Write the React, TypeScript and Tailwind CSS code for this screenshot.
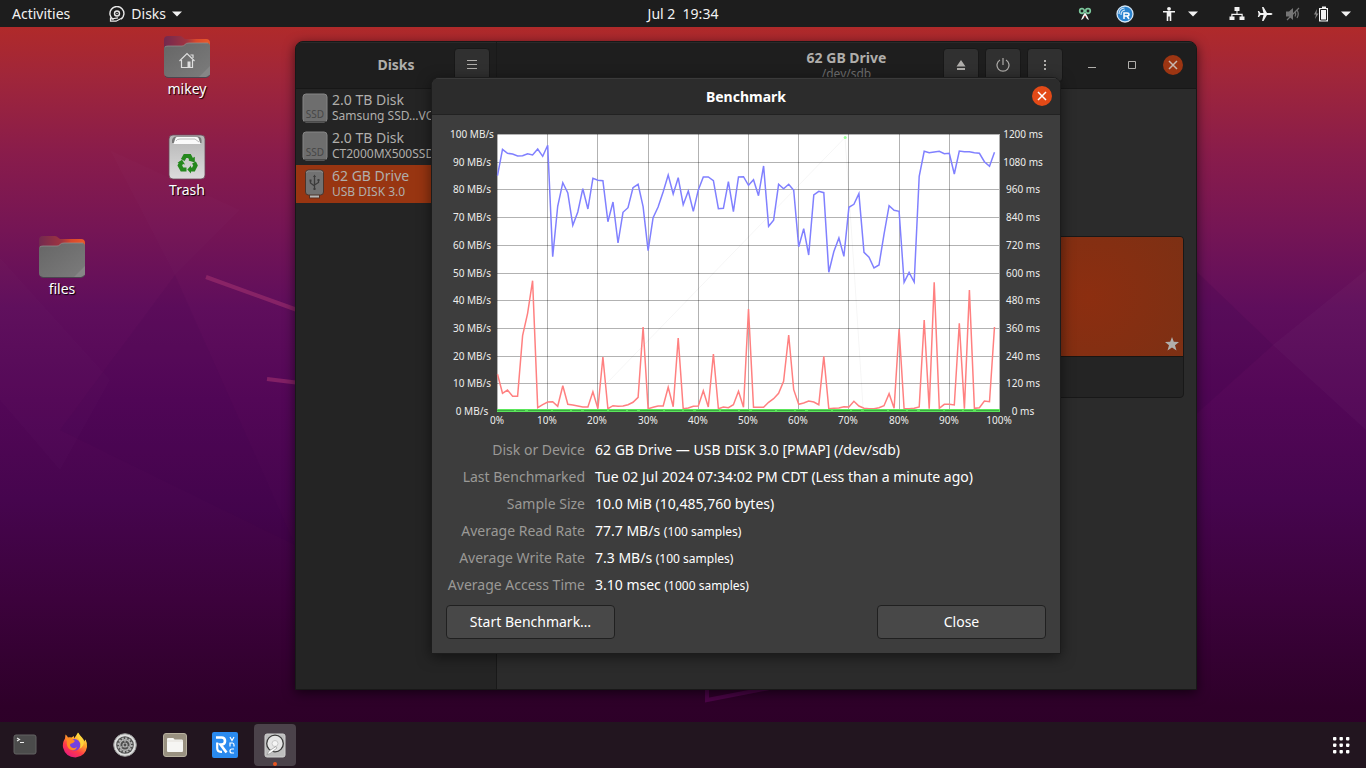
import React from "react";

const READ_TRACE = [
  182, 103, 115, 117, 123, 122, 116, 120, 102, 124, 91, 425, 274, 203, 234, 331, 291, 221, 282, 190,
  196, 197, 320, 261, 384, 292, 278, 218, 208, 275, 407, 308, 276, 230, 180, 237, 188, 269, 228, 289,
  225, 186, 186, 197, 281, 280, 200, 290, 186, 185, 211, 194, 242, 153, 334, 316, 208, 221, 208, 226,
  395, 341, 420, 240, 229, 233, 472, 410, 369, 424, 277, 268, 236, 412, 427, 459, 450, 358, 272, 286,
  289, 502, 472, 501, 184, 109, 113, 111, 109, 116, 115, 177, 108, 110, 110, 113, 115, 140, 154, 112,
];

const WRITE_TRACE = [
  313, 370, 360, 379, 379, 197, 130, 32, 413, 404, 396, 395, 409, 347, 403, 405, 408, 411, 411, 365,
  416, 261, 416, 407, 409, 408, 404, 397, 382, 171, 416, 412, 408, 408, 352, 410, 204, 416, 414, 409,
  408, 362, 411, 252, 416, 411, 413, 404, 364, 412, 117, 412, 412, 412, 397, 386, 370, 334, 195, 359,
  403, 399, 393, 396, 404, 259, 416, 415, 414, 410, 411, 394, 408, 415, 416, 416, 413, 407, 371, 415,
  177, 416, 416, 415, 411, 150, 416, 37, 415, 403, 403, 405, 160, 416, 60, 415, 413, 393, 395, 171,
];

const PLOT = { left: 497, top: 134, width: 502, height: 277 };
const STEP = PLOT.width / 100;

const toPoints = (trace: number[], origin: number) =>
  trace.map((v, i) => `${(PLOT.left + 0.5 + i * STEP).toFixed(1)},${(origin + v / 3).toFixed(1)}`).join(" ");

const TICKS = [0, 1, 2, 3, 4, 5, 6, 7, 8, 9, 10];

function BenchmarkChart() {
  return (
    <svg viewBox="446 127 600 302" className="block h-auto w-full" role="img" aria-label="Benchmark graph">
      <rect x={PLOT.left} y={PLOT.top} width={PLOT.width + 1} height={PLOT.height + 1} fill="#fff" />
      <g stroke="#000" strokeOpacity="0.3" shapeRendering="crispEdges">
        {TICKS.map((t) => {
          const x = Math.round(PLOT.left + t * 50.2) + 0.5;
          const y = Math.round(PLOT.top + t * 27.7) + 0.5;
          return (
            <React.Fragment key={t}>
              <line x1={x} x2={x} y1={PLOT.top} y2={PLOT.top + PLOT.height} />
              <line x1={PLOT.left} x2={PLOT.left + PLOT.width} y1={y} y2={y} />
            </React.Fragment>
          );
        })}
      </g>
      <path d="M606 384 L845 137.5 L854 268 L863 407" fill="none" stroke="#000" strokeOpacity="0.06" strokeWidth="0.7" />
      <polyline points={toPoints(READ_TRACE, 115)} fill="none" stroke="#8080ff" strokeWidth="1.5" />
      <polyline points={toPoints(WRITE_TRACE, 270)} fill="none" stroke="#ff8080" strokeWidth="1.5" />
      <rect x="497" y="409" width="503" height="3" fill="#5ae65a" />
      <line x1="497" x2="1000" y1="410.5" y2="410.5" stroke="#2f8a3a" strokeOpacity="0.65" strokeDasharray="17 2 9 3 23 2" />
      <circle cx="845.2" cy="137.6" r="1.5" fill="#99ff99" />
      <g fill="#eeeeec" fontSize="10" textAnchor="middle">
        {TICKS.map((t) => (
          <React.Fragment key={t}>
            <text x="472" y={Math.round(411 - t * 27.7) + 4}>{t * 10} MB/s</text>
            <text x="1023" y={Math.round(411 - t * 27.7) + 4}>{t * 120} ms</text>
            <text x={Math.round(497 + t * 50.2)} y="424">{t * 10}%</text>
          </React.Fragment>
        ))}
      </g>
    </svg>
  );
}

function Wallpaper() {
  return (
    <svg className="absolute inset-0 h-full w-full" viewBox="0 0 1366 768" preserveAspectRatio="none" aria-hidden="true">
      <defs>
        <linearGradient id="sky" x1="0" y1="0" x2="0" y2="1">
          <stop offset="0.035" stopColor="#b02a2a" />
          <stop offset="0.1" stopColor="#a0263a" />
          <stop offset="0.2" stopColor="#891c4b" />
          <stop offset="0.3" stopColor="#751555" />
          <stop offset="0.4" stopColor="#5f0e5c" />
          <stop offset="0.52" stopColor="#530757" />
          <stop offset="0.65" stopColor="#46054e" />
          <stop offset="0.78" stopColor="#3c023c" />
          <stop offset="0.92" stopColor="#2e0029" />
          <stop offset="1" stopColor="#2c0027" />
        </linearGradient>
      </defs>
      <rect width="1366" height="768" fill="url(#sky)" />
      <path d="M0 258 L110 380 L60 470 L0 400Z" fill="#fff" fillOpacity="0.012" />
      <path d="M110 150 L175 275 L240 210Z" fill="#fff" fillOpacity="0.012" />
      <path d="M175 275 L60 430 L295 545Z" fill="#30004a" fillOpacity="0.08" />
      <path d="M1366 270 L1273 345 L1366 430Z" fill="#fff" fillOpacity="0.025" />
      <path d="M1195 270 L1273 345 L1195 415Z" fill="#30004a" fillOpacity="0.14" />
      <g fill="none" stroke="#a0306e" strokeOpacity="0.6" strokeWidth="4">
        <path d="M206 277 L300 311" />
        <path d="M267 379 L300 383" />
      </g>
      <path d="M707 680 V700 L790 684" fill="none" stroke="#4c0548" strokeWidth="4" />
    </svg>
  );
}

function Folder({ home, id }: { home?: boolean; id: string }) {
  return (
    <svg width="48" height="44" viewBox="0 0 48 44" aria-hidden="true">
      <defs>
        <linearGradient id={`${id}-back`}>
          <stop offset="0" stopColor="#72294f" />
          <stop offset="0.5" stopColor="#a03440" />
          <stop offset="0.7" stopColor="#d9482c" />
          <stop offset="1" stopColor="#ea5a2a" />
        </linearGradient>
        <linearGradient id={`${id}-front`} x2="1" y2="1">
          <stop offset="0" stopColor="#666" />
          <stop offset="1" stopColor="#7c7c7c" />
        </linearGradient>
      </defs>
      <path d="M1 5 Q1 1 5 1 H17 Q19 1 20 2.500 L22 4 H43 Q47 4 47 8 V30 H1Z" fill={`url(#${id}-back)`} />
      <path d="M1 13 Q1 11 4 11 H19 Q21 11 22 9.500 Q23 8 26 8 H44 Q47 8 47 11 V38 Q47 42 43 42 H5 Q1 42 1 38Z" fill={`url(#${id}-front)`} />
      <path d="M2 12 Q3 11 5 11 H19 Q21 11 22 9.500 Q23 8 26 8 H45" fill="none" stroke="#929292" strokeWidth="0.7" />
      <path d="M47 31 L36 42 H43 Q47 42 47 38Z" fill="#868686" />
      <path d="M2 41 Q3 42.500 5 42.500 H43 Q46 42 46.500 40" fill="none" stroke="#4c4650" strokeWidth="1" />
      {home && (
        <g fill="none" stroke="#dedede" strokeWidth="1.200">
          <path d="M16.500 26 L24 18.500 L31.500 26 M18.500 25 V32.500 H29.500 V25 M27.500 20 h2.500 v3" />
          <path d="M24.500 26.500 h3 v6 h-3z" fill="#dedede" stroke="none" />
        </g>
      )}
    </svg>
  );
}

function TrashIcon() {
  return (
    <svg width="38" height="46" viewBox="0 0 38 46" aria-hidden="true">
      <defs>
        <linearGradient id="bin" x2="0" y2="1">
          <stop offset="0" stopColor="#b5b5b5" />
          <stop offset="1" stopColor="#dcdcdc" />
        </linearGradient>
      </defs>
      <rect x="1" y="1" width="36" height="44" rx="4" fill="url(#bin)" stroke="#6b4658" strokeWidth="0.800" />
      <path d="M4 9 V6 Q5 2.500 8 2.500 H30 Q33 2.500 33.500 6 V9Z" fill="#777" />
      <path d="M5.500 10 L7.500 4 Q8 3 9 3 H28 Q30 3 30.500 4 L32.500 10Z" fill="#fafafa" />
      <path d="M8 7 Q9 5 12 5 H27 L31 8" fill="none" stroke="#aaa" strokeWidth="0.800" />
      <g fill="none" stroke="#25881d" strokeWidth="4.200">
        <path d="M14.800 26 L17 22 H21.500 L23.300 25.500" />
        <path d="M26 28.500 L27.500 31.500 L25.500 35.500 H22" />
        <path d="M18.500 35.500 H14 L11.800 31.500 L13.300 28.500" />
      </g>
      <g fill="#25881d">
        <path d="M20.500 26.500 L26.800 22.800 V28.500Z" />
        <path d="M23 31.500 V39.500 L19.300 35.500Z" />
        <path d="M9.500 28.800 L14 25.800 L17 30.500Z" />
      </g>
    </svg>
  );
}

function DesktopItem({ label, place, children }: { label: string; place: string; children: React.ReactNode }) {
  return (
    <a
      href={`#${label}`}
      className={`absolute flex w-24 flex-col items-center text-sm leading-5 text-white [text-shadow:1px_1px_1px_#000] ${place}`}
    >
      {children}
      <span>{label}</span>
    </a>
  );
}

const Caret = () => (
  <svg width="10" height="6" viewBox="0 0 10 6" aria-hidden="true">
    <path d="M0 0.500 H10 L5 5.500Z" fill="#f2f2f2" />
  </svg>
);

function TopBar() {
  return (
    <header className="relative z-10 flex h-[27px] items-center justify-between bg-[#1d1d1d] text-sm text-[#f2f2f2]">
      <div className="flex items-center gap-[39px] pl-3">
        <button type="button">Activities</button>
        <button type="button" className="flex items-center gap-1.5">
          <svg width="16" height="16" viewBox="0 0 16 16" fill="none" stroke="#e8e8e8" strokeWidth="1.400" aria-hidden="true">
            <path d="M4.500 13.600 A7 7 0 1 1 12 13.200" />
            <circle cx="8" cy="7.500" r="2.500" />
            <circle cx="8" cy="7.500" r="0.700" fill="#e8e8e8" stroke="none" />
            <path d="M1.500 11.500 V15.200 H7 L14 11.500 M2 13 L9 11.800" strokeWidth="1.200" />
          </svg>
          <span>Disks</span>
          <Caret />
        </button>
      </div>
      <button type="button" className="absolute left-1/2 -translate-x-1/2 whitespace-pre">Jul 2  19:34</button>
      <div className="flex items-center pr-[15px]">
        <svg width="14" height="14" viewBox="0 0 14 14" aria-hidden="true">
          <path d="M4.500 9.500 L3 13 L5 12 L7 8.500 L9 12 L11 13 L9.500 9.500 L7.500 6 H6.500Z" fill="#f4f4f4" />
          <path d="M6 9 L8 9 L7 11Z" fill="#b54040" />
          <g fill="none" stroke="#7cc79c" strokeWidth="1.700">
            <circle cx="4" cy="4" r="2.300" />
            <circle cx="10" cy="4" r="2.300" />
          </g>
        </svg>
        <svg className="ml-6" width="18" height="18" viewBox="0 0 18 18" aria-hidden="true">
          <circle cx="9" cy="9" r="8" fill="#2b84d0" stroke="#d3e5f5" strokeWidth="1.300" />
          <path d="M3 9 Q3 3.500 8.500 3 M5 10 Q5 5.500 9 5" fill="none" stroke="#cfe4f7" strokeWidth="1.200" />
          <path d="M8 14 V8 H11 Q13 8 13 9.500 Q13 11 11 11 H8 M11 11 L13 14" fill="none" stroke="#fff" strokeWidth="1.500" />
        </svg>
        <button type="button" aria-label="Accessibility" className="ml-7 flex items-center gap-3">
          <svg width="14" height="16" viewBox="0 0 14 16" fill="#f2f2f2" aria-hidden="true">
            <circle cx="7" cy="2.800" r="1.900" />
            <path d="M1 5 H13 V6.500 H9.300 V15 H7.700 V10.500 H6.300 V15 H4.700 V6.500 H1Z" />
          </svg>
          <Caret />
        </button>
        <button type="button" aria-label="System" className="ml-[31px] flex items-center gap-3">
          <svg width="16" height="15" viewBox="0 0 16 15" fill="#f2f2f2" aria-hidden="true">
            <path d="M5.500 1 h5 v4 h-2 v2.800 h5.200 v2.700 h1.800 v3.500 h-5 v-3.500 h2 v-1.500 h-9 v1.500 h2 v3.500 h-5 v-3.500 h1.800 v-2.700 h5.200 v-2.800 h-2z" />
          </svg>
          <svg width="16" height="16" viewBox="0 0 16 16" fill="#f2f2f2" aria-hidden="true">
            <path d="M15.500 8 Q15.500 7 13.500 7 H10 L6.500 1 H5 L6.500 7 H3.500 L2 5 H0.800 L1.600 8 L0.800 11 H2 L3.500 9 H6.500 L5 15 H6.500 L10 9 H13.500 Q15.500 9 15.500 8Z" />
          </svg>
          <svg width="16" height="16" viewBox="0 0 16 16" fill="#757575" aria-hidden="true">
            <path d="M1 5.500 H4 L8 2 V14 L4 10.500 H1Z" />
            <path d="M10 5.500 Q11.500 8 10 10.500 M12 4 Q14.500 8 12 12 M14 2 L2 14" fill="none" stroke="#757575" strokeWidth="1.200" />
          </svg>
          <svg width="16" height="16" viewBox="0 0 16 16" aria-hidden="true">
            <path d="M4 3 L1 8.500 H3 L2 13 L5.500 7.500 H3.500Z" fill="#8a8a8a" />
            <path d="M9 0.500 h4 v1.500 h2 v13.500 h-9 v-13.500 h3z" fill="#f2f2f2" />
            <path d="M7.500 3.500 h6 v10.500 h-6z" fill="none" stroke="#1d1d1d" strokeWidth="1" />
          </svg>
          <Caret />
        </button>
      </div>
    </header>
  );
}

function SsdIcon() {
  return (
    <svg width="26" height="30" viewBox="0 0 26 30" aria-hidden="true">
      <rect x="1" y="1" width="24" height="28" rx="3" fill="#6e6e6e" stroke="#858585" />
      <path d="M2 28.500 H24" stroke="#4b4b4b" />
      <text x="13" y="25" fontSize="10" textAnchor="middle" fill="#474747">SSD</text>
    </svg>
  );
}

function UsbIcon() {
  return (
    <svg width="26" height="30" viewBox="0 0 26 30" aria-hidden="true">
      <rect x="7.500" y="24" width="10" height="5" fill="#b5b5b5" stroke="#5a3020" />
      <rect x="3.500" y="1" width="18" height="25" rx="3" fill="#727272" stroke="#4c342b" />
      <path d="M4.500 4 Q4.500 2 6.500 2 H18.500 Q20.500 2 20.500 4" fill="none" stroke="#8c8c8c" />
      <g fill="none" stroke="#3c3c3c" strokeWidth="1.300">
        <path d="M12.500 7 V20 M8.500 12 V14 L12.500 17 M16.500 11 V13.500 L12.500 16" />
        <path d="M12.500 5.500 l-1.500 2.500 h3z M11.500 19 h2 v2 h-2z M7.500 10.500 h2 v2 h-2z M15.500 10 h2 v2 h-2z" fill="#3c3c3c" stroke="none" />
      </g>
    </svg>
  );
}

const DRIVES = [
  { name: "2.0 TB Disk", model: "Samsung SSD…VO", icon: <SsdIcon />, selected: false },
  { name: "2.0 TB Disk", model: "CT2000MX500SSD1", icon: <SsdIcon />, selected: false },
  { name: "62 GB Drive", model: "USB DISK 3.0", icon: <UsbIcon />, selected: true },
];

function HeaderButton({ label, children }: { label: string; children: React.ReactNode }) {
  return (
    <button
      type="button"
      aria-label={label}
      className="flex h-[34px] w-9 items-center justify-center rounded border border-[#181818] bg-[#303030] text-[#b0aeab]"
    >
      {children}
    </button>
  );
}

const Cross = () => (
  <svg width="10" height="10" viewBox="0 0 10 10" aria-hidden="true">
    <path d="M1 1 L9 9 M9 1 L1 9" stroke="currentColor" strokeWidth="1.500" />
  </svg>
);

function DisksWindow() {
  return (
    <section
      aria-label="Disks"
      className="absolute top-3.5 left-[295px] flex h-[649px] w-[902px] overflow-hidden rounded-t-lg border border-[#181818] bg-[#2b2b2b] text-[#b0aeab] shadow-[0_3px_12px_rgba(0,0,0,0.6)]"
    >
      <aside className="flex w-[201px] shrink-0 flex-col border-r border-[#191919] bg-[#242424]">
        <div className="relative flex h-[47px] items-center justify-center border-t border-b border-t-[#292929] border-b-[#171717] bg-[#1e1e1e] pb-0.5">
          <h1 className="text-sm font-bold">Disks</h1>
          <div className="absolute right-1.5">
            <HeaderButton label="Menu">
              <svg width="10" height="10" viewBox="0 0 10 10" aria-hidden="true">
                <path d="M0 0.500 H10 M0 4.500 H10 M0 8.500 H10" stroke="currentColor" />
              </svg>
            </HeaderButton>
          </div>
        </div>
        <ul>
          {DRIVES.map((d) => (
            <li key={d.model}>
              <button
                type="button"
                className={`flex h-[38px] w-full items-center gap-1 overflow-hidden pl-1.5 text-left whitespace-nowrap ${d.selected ? "bg-[#983511]" : ""}`}
              >
                <span className="shrink-0">{d.icon}</span>
                <span className="flex flex-col pb-px">
                  <span className="text-sm leading-4">{d.name}</span>
                  <span className="text-xs leading-4">{d.model}</span>
                </span>
              </button>
            </li>
          ))}
        </ul>
      </aside>
      <div className="flex min-w-0 flex-1 flex-col">
        <div className="relative flex h-[47px] shrink-0 items-center justify-end border-t border-b border-t-[#292929] border-b-[#171717] bg-[#1e1e1e] pr-[13px]">
          <div className="absolute inset-x-0 flex flex-col items-center">
            <h2 className="text-sm leading-4 font-bold">62 GB Drive</h2>
            <span className="text-xs leading-4 text-[#6f6f6f]">/dev/sdb</span>
          </div>
          <div className="relative flex items-center pb-0.5">
            <div className="flex gap-1.5">
              <HeaderButton label="Eject">
                <svg width="10" height="10" viewBox="0 0 10 10" fill="currentColor" aria-hidden="true">
                  <path d="M5 0 L9.500 6.500 H0.500Z M1 8 H9 V10 H1Z" />
                </svg>
              </HeaderButton>
              <HeaderButton label="Power off">
                <svg width="14" height="14" viewBox="0 0 14 14" fill="none" stroke="currentColor" strokeWidth="1.200" aria-hidden="true">
                  <path d="M4 2 A6 6 0 1 0 10 2 M7 0 V7" />
                </svg>
              </HeaderButton>
              <HeaderButton label="Drive options">
                <svg width="4" height="12" viewBox="0 0 4 12" fill="currentColor" aria-hidden="true">
                  <path d="M1 1 h2 v2 h-2z M1 5 h2 v2 h-2z M1 9 h2 v2 h-2z" />
                </svg>
              </HeaderButton>
            </div>
            <div className="ml-6 flex items-center gap-[30px]">
              <button type="button" aria-label="Minimize">
                <svg width="10" height="10" viewBox="0 0 10 10" aria-hidden="true">
                  <path d="M1 7.500 H9" stroke="currentColor" />
                </svg>
              </button>
              <button type="button" aria-label="Maximize">
                <svg width="10" height="10" viewBox="0 0 10 10" aria-hidden="true">
                  <path d="M1.500 1.500 H8.500 V8.500 H1.500Z" fill="none" stroke="currentColor" />
                </svg>
              </button>
              <button type="button" aria-label="Close window" className="-ml-1 flex size-5 items-center justify-center rounded-full bg-[#9c3512] text-[#c8b8b0]">
                <Cross />
              </button>
            </div>
          </div>
        </div>
        <div className="px-3 pt-[147px]">
          <div className="flex h-[162px] flex-col overflow-hidden rounded border border-[#181818] bg-[#242424]">
            <div className="flex h-[120px] items-end justify-end border-b border-[#1a1512] bg-[radial-gradient(circle_at_86%_50%,#8c2e10,#7d3014_110px)] px-1 pb-[5px]">
              <svg width="14" height="14" viewBox="0 0 14 14" className="text-[#b0aeab]" role="img" aria-label="Mounted">
                <path d="M7 0 L8.800 4.800 L14 5 L10 8.300 L11.500 13.500 L7 10.500 L2.500 13.500 L4 8.300 L0 5 L5.200 4.800Z" fill="currentColor" />
              </svg>
            </div>
          </div>
        </div>
      </div>
    </section>
  );
}

const DETAILS = [
  { label: "Disk or Device", value: "62 GB Drive — USB DISK 3.0 [PMAP] (/dev/sdb)", note: "" },
  { label: "Last Benchmarked", value: "Tue 02 Jul 2024 07:34:02 PM CDT (Less than a minute ago)", note: "" },
  { label: "Sample Size", value: "10.0 MiB (10,485,760 bytes)", note: "" },
  { label: "Average Read Rate", value: "77.7 MB/s", note: "(100 samples)" },
  { label: "Average Write Rate", value: "7.3 MB/s", note: "(100 samples)" },
  { label: "Average Access Time", value: "3.10 msec", note: "(1000 samples)" },
];

function BenchmarkDialog() {
  return (
    <div
      role="dialog"
      aria-labelledby="benchmark-title"
      className="absolute top-[50px] left-[431px] w-[630px] overflow-hidden rounded-t-lg border border-[#1c1c1c] bg-[#3d3d3d] text-sm text-white shadow-[0_3px_14px_rgba(0,0,0,0.5)]"
    >
      <div className="relative flex h-[37px] items-center justify-center border-t border-b border-t-[#3a3a3a] border-b-[#222] bg-[#2c2c2c]">
        <h2 id="benchmark-title" className="font-bold">Benchmark</h2>
        <button type="button" aria-label="Close dialog" className="absolute top-[7px] right-2 flex size-5 items-center justify-center rounded-full bg-[#e34a17] text-white">
          <Cross />
        </button>
      </div>
      <div className="px-3.5 pt-3 pb-3.5">
        <BenchmarkChart />
        <dl className="mt-[7px] grid grid-cols-[139px_1fr] gap-x-2.5 leading-[27px]">
          {DETAILS.map((d) => (
            <React.Fragment key={d.label}>
              <dt className="text-right whitespace-nowrap text-[#9a9996]">{d.label}</dt>
              <dd className="whitespace-nowrap">
                {d.value} {d.note && <span className="text-xs">{d.note}</span>}
              </dd>
            </React.Fragment>
          ))}
        </dl>
        <div className="mt-[7px] flex justify-between">
          <button type="button" className="h-[34px] w-[169px] rounded border border-[#202020] bg-[#484848]">Start Benchmark…</button>
          <button type="button" className="h-[34px] w-[169px] rounded border border-[#202020] bg-[#484848]">Close</button>
        </div>
      </div>
    </div>
  );
}

const TerminalIcon = () => (
  <svg width="24" height="22" viewBox="0 0 24 22" aria-hidden="true">
    <rect x="1" y="1" width="22" height="19" rx="2" fill="#4b4b4b" stroke="#636363" />
    <path d="M4 4 L6.500 5.500 L4 7 M7 8.500 H11" fill="none" stroke="#eee" strokeWidth="1.100" />
  </svg>
);

const FirefoxIcon = () => (
  <svg width="26" height="26" viewBox="0 0 26 26" aria-hidden="true">
    <defs>
      <linearGradient id="fx" x1="0.800" y1="0" x2="0.200" y2="1">
        <stop offset="0.050" stopColor="#fff44f" />
        <stop offset="0.350" stopColor="#ffa22a" />
        <stop offset="0.650" stopColor="#ff3b47" />
        <stop offset="1" stopColor="#e31587" />
      </linearGradient>
    </defs>
    <path d="M16 0.500 Q17.500 3 20 5.500 Q22 7.500 22 9.500 L23.500 7.500 Q25.500 11 25 15 Q23.500 24.500 13.500 25.500 Q3.500 25 1.200 16 Q0 11 3 6.500 L3.500 2.500 Q5 3.500 6 5.500 Q8 5 9.500 5.500 L12 4 V6.500 Q14 4 16 0.500Z" fill="url(#fx)" />
    <circle cx="12.500" cy="12.800" r="5.800" fill="#7541e0" />
    <path d="M3 6.500 Q7 5 9.500 6.500 L13 9 L11 11 Q9 11 8 12.500 Q8 15 11 16 Q13 16.500 15 15 Q13 20 8 17.500 Q4 15 5 9Z" fill="#ff8b22" />
    <path d="M16 1 Q15 5 17 8 Q20 12 17.500 17 Q23 14 21.500 8.500 Q19 5 16 1Z" fill="#ffd43c" />
  </svg>
);

const SettingsIcon = () => (
  <svg width="24" height="24" viewBox="0 0 24 24" aria-hidden="true">
    <circle cx="12" cy="12" r="11.300" fill="#dedede" stroke="#969696" />
    <circle cx="12" cy="12" r="8.800" fill="#4e4e4e" />
    <circle cx="12" cy="12" r="6.800" fill="none" stroke="#b5b5b5" strokeWidth="1.800" strokeDasharray="2.100 1.460" />
    <circle cx="12" cy="12" r="5.300" fill="none" stroke="#b5b5b5" strokeWidth="1.500" />
    <circle cx="12" cy="12" r="2" fill="none" stroke="#b5b5b5" strokeWidth="1.200" />
    <path d="M12 9 V7 M14.600 13.500 L16.500 14.600 M9.400 13.500 L7.500 14.600" stroke="#b5b5b5" strokeWidth="1.200" />
  </svg>
);

const FilesIcon = () => (
  <svg width="24" height="24" viewBox="0 0 24 24" aria-hidden="true">
    <rect x="0.500" y="0.500" width="23" height="23" rx="2.500" fill="#999080" stroke="#b8b09f" />
    <path d="M4 6 Q4 5 5 5 H10 Q11 5 11.500 6.500 H19 Q20 6.500 20 8 V18 Q20 19 19 19 H5 Q4 19 4 18Z" fill="#f6f5f3" />
    <path d="M4 8 H20" stroke="#dbd7cf" strokeWidth="0.700" />
  </svg>
);

const RvncIcon = () => (
  <svg width="26" height="26" viewBox="0 0 26 26" fill="none" stroke="#fff" aria-hidden="true">
    <rect width="26" height="26" rx="2" fill="#2a8af0" stroke="none" />
    <path d="M4 5.500 H9.500 Q13 5.500 13 9 Q13 12.500 9.500 12.500 H8.500 L14.500 20.500" strokeWidth="2.600" />
    <path d="M5.200 10.500 V16 Q5.200 19.800 9 19.800 H10" strokeWidth="2.200" />
    <path d="M18 5 L20 8.500 L22 5 M18 14.500 V11 H20.500 Q22 11 22 13 V14.500 M22 17 H20 Q18 17 18 19 Q18 21 20 21 H22" strokeWidth="1.200" />
  </svg>
);

const DiskAppIcon = () => (
  <svg width="22" height="25" viewBox="0 0 22 25" aria-hidden="true">
    <rect x="1" y="1" width="20" height="23" rx="2" fill="#bdbdbd" stroke="#d0d0d0" />
    <circle cx="11" cy="10.500" r="8.300" fill="#e6e6e6" stroke="#3c3c3c" strokeWidth="1.300" />
    <circle cx="11" cy="10.500" r="3" fill="#f5f5f5" stroke="#c8c8c8" />
    <path d="M3 21.500 L5 18 L12 13.500 L13 15 L6 20.500Z" fill="#fff" stroke="#888" strokeWidth="0.600" />
  </svg>
);

const APPS = [
  { name: "Terminal", icon: <TerminalIcon />, active: false },
  { name: "Firefox", icon: <FirefoxIcon />, active: false },
  { name: "Settings", icon: <SettingsIcon />, active: false },
  { name: "Files", icon: <FilesIcon />, active: false },
  { name: "RealVNC Viewer", icon: <RvncIcon />, active: false },
  { name: "Disks", icon: <DiskAppIcon />, active: true },
];

function Dock() {
  return (
    <nav aria-label="Dock" className="relative flex h-[46px] items-center justify-between bg-[#22151f] pr-4 pl-1">
      <div className="flex gap-2">
        {APPS.map((a) => (
          <button
            key={a.name}
            type="button"
            aria-label={a.name}
            className={`relative flex size-[42px] items-center justify-center rounded ${a.active ? "bg-[#4b424a]" : ""}`}
          >
            {a.icon}
            {a.active && <span className="absolute bottom-0 size-1 rounded-full bg-[#e95420]" />}
          </button>
        ))}
      </div>
      <button type="button" aria-label="Show applications">
        <svg width="18" height="18" viewBox="0 0 18 18" fill="#fff" aria-hidden="true">
          {[1, 7.5, 14].map((y) => [1, 7.5, 14].map((x) => <rect key={`${x}-${y}`} x={x} y={y} width="3.4" height="3.4" rx="0.8" />))}
        </svg>
      </button>
    </nav>
  );
}

export default function App() {
  return (
    <div className="relative flex min-h-screen flex-col overflow-hidden bg-[#2c0027] font-['Noto_Sans','Open_Sans',sans-serif]">
      <Wallpaper />
      <TopBar />
      <main className="relative flex-1">
        <DesktopItem label="mikey" place="top-[8px] left-[139px]">
          <Folder home id="home" />
        </DesktopItem>
        <DesktopItem label="Trash" place="top-[107px] left-[139px]">
          <TrashIcon />
        </DesktopItem>
        <DesktopItem label="files" place="top-[208px] left-[14px]">
          <Folder id="files" />
        </DesktopItem>
        <DisksWindow />
        <BenchmarkDialog />
      </main>
      <Dock />
    </div>
  );
}
